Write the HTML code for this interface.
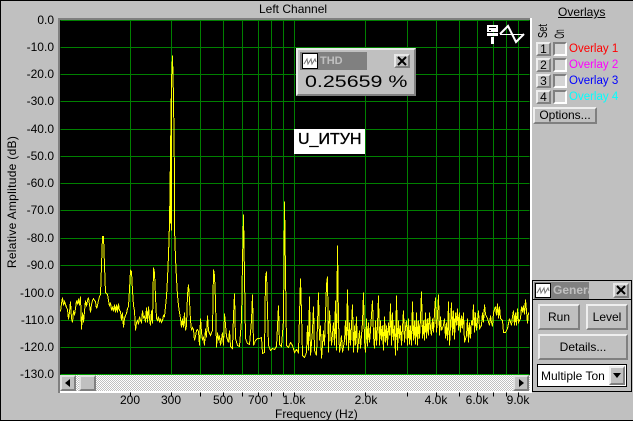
<!DOCTYPE html>
<html><head><meta charset="utf-8"><style>
*{box-sizing:border-box}
html,body{margin:0;padding:0}
body{width:633px;height:421px;overflow:hidden;background:#c0c0c0;font-family:"Liberation Sans",Arial,sans-serif;font-size:12px;color:#000;position:relative}
.a{position:absolute}
.t{position:absolute;white-space:nowrap;line-height:14px}
.yl{position:absolute;right:579px;white-space:nowrap;line-height:14px}
.xl{position:absolute;top:393px;width:50px;margin-left:-25px;text-align:center;line-height:14px}
.b{position:absolute;background:#c0c0c0;border:2px solid;border-color:#eee #808080 #808080 #eee;text-align:center;white-space:nowrap}
.ck{position:absolute;left:553px;width:14px;height:14px;background:#d4d4d4;border:2px solid;border-color:#808080 #fff #fff #808080}
.ov{position:absolute;left:569px;font-size:11.5px;line-height:14px;white-space:nowrap}
</style></head><body>
<div class="a" style="left:0;top:0;width:633px;height:1px;background:#000"></div>
<div class="a" style="left:0;top:0;width:1px;height:421px;background:#000"></div>
<div class="a" style="left:0;top:420px;width:633px;height:1px;background:#000"></div>
<div class="t" style="left:259px;top:2px">Left Channel</div>

<div class="a" style="left:58px;top:18px;width:474px;height:375px;background:#808080"></div>
<div class="a" style="left:530px;top:18px;width:2px;height:375px;background:#fff"></div>
<div class="a" style="left:60px;top:391px;width:472px;height:2px;background:#fff"></div>
<div class="a" style="left:60px;top:20px;width:470px;height:355px;background:#000"></div>

<svg class="a" style="left:0;top:0" width="633" height="421" viewBox="0 0 633 421" shape-rendering="crispEdges">
<g stroke="#008000" stroke-width="1" fill="none" transform="translate(.5,.5)">
<path d="M60 20H529M60 47H529M60 74H529M60 101H529M60 129H529M60 156H529M60 183H529M60 210H529M60 238H529M60 265H529M60 293H529M60 320H529M60 347H529"/>
<path d="M130 20V374M171 20V374M200 20V374M223 20V374M242 20V374M258 20V374M271 20V374M283 20V374M294 20V374M365 20V374M407 20V374M436 20V374M459 20V374M477 20V374M493 20V374M506 20V374M518 20V374"/>
<path stroke="#00a000" d="M60 374H529"/>
</g>
<g stroke="#000" stroke-width="1" fill="none" transform="translate(.5,.5)">
<path d="M130 392V396M171 392V396M200 392V396M223 392V396M242 392V396M258 392V396M271 392V396M283 392V396M294 392V396M365 392V396M407 392V396M436 392V396M459 392V396M477 392V396M493 392V396M506 392V396M518 392V396"/>
</g>
<g stroke="#ffff00" stroke-width="1" fill="none" transform="translate(.5,.5)">
<polyline points="60,311 61,303 62,297 63,305 64,301 65,304 66,307 67,309 68,319 69,312 70,301 71,318 72,322 73,310 74,315 75,308 76,300 77,304 78,298 79,305 80,296 81,329 82,312 83,322 84,311 85,300 86,306 87,300 88,297 89,304 90,312 91,304 92,300 93,298 94,300 95,301 96,308 97,305 98,300 99,296 100,294 101,265 102,236 103,236 104,265 105,292 106,293 107,294 108,300 109,306 110,302 111,310 112,306 113,311 114,304 115,312 116,304 117,312 118,303 119,310 120,311 121,320 122,312 123,327 124,318 125,315 126,313 127,308 128,306 129,289 130,270 131,271 132,290 133,305 134,310 135,330 136,322 137,320 138,324 139,316 140,320 141,322 142,310 143,318 144,315 145,322 146,307 147,322 148,306 149,318 150,325 151,310 152,323 153,267 154,272 155,296 156,318 157,320 158,316 159,322 160,318 161,322 162,320 163,315 164,316 165,306 166,296 167,278 168,255 169,223 170,154 171,80 172,55 173,97 174,176 174,228 175,258 176,278 177,295 178,305 179,312 180,318 181,327 182,318 183,327 184,312 185,330 186,325 187,294 188,284 189,300 190,320 191,330 192,327 193,329 194,340 195,336 196,330 197,329 198,331 199,345 200,318 201,332 202,340 203,336 204,345 205,328 206,337 207,315 208,330 209,333 210,335 211,332 212,330 213,269 214,275 215,300 216,347 217,332 218,340 219,335 220,345 222,332 223,345 224,313 226,336 228,342 229,330 230,346 232,348 233,315 234,293 235,338 237,345 239,346 241,320 242,260 243,214 244,276 245,338 247,343 249,344 251,320 252,294 253,345 255,340 257,338 259,338 261,337 262,353 264,352 265,277 266,271 267,310 268,345 270,350 272,348 274,349 276,346 277,326 278,305 279,344 281,346 283,320 284,201 285,272 286,345 288,347 290,342 292,345 294,352 296,349 298,352 299,315 300,278 301,312 302,355 304,357 306,352 307,325 308,350 309,296 310,355 312,330 313,306 314,350 316,355 318,292 319,340 320,325 321,358 323,330 324,345 326,284 327,276 328,352 329,310 331,345 333,322 334,345 335,300 336,350 337,245 338,320 339,352 341,335 342,352 344,340 345,320 346,345 347,289 348,350 349,322 350,345 352,304 353,352 354,325 355,345 356,316 357,352 359,330 360,348 362,322 363,292 364,340 365,352 366,318 367,346 368,322 369,342 370,330 372,300 373,335 374,348 375,320 376,345 377,325 378,295 379,345 380,320 381,340 382,325 383,350 384,316 385,342 386,325 387,345 388,322 389,335 390,303 391,345 392,312 393,340 394,325 395,355 396,295 397,350 398,320 399,338 400,325 401,345 403,310 404,342 405,327 406,320 407,345 408,318 409,344 410,325 411,345 412,301 413,340 414,320 415,344 416,312 417,345 418,320 419,338 420,318 421,291 422,338 423,320 424,340 425,312 426,338 427,318 428,335 429,312 430,328 431,335 432,318 433,332 434,312 435,297 436,332 437,315 438,294 439,335 440,316 441,330 443,325 444,318 445,338 446,322 447,340 448,301 449,345 450,325 451,302 452,335 453,310 454,339 455,312 456,325 457,308 458,330 459,312 460,332 461,315 462,328 463,312 464,342 466,335 467,318 468,342 469,322 470,338 471,320 472,325 473,304 474,332 475,312 476,330 478,310 479,328 481,325 482,312 483,322 484,304 485,314 487,318 489,325 490,315 491,322 492,326 493,312 495,306 496,315 497,303 498,318 499,306 500,318 502,320 503,332 505,332 507,328 509,318 511,325 512,316 513,310 514,325 515,312 516,325 517,308 518,322 520,318 521,306 522,312 523,305 524,314 525,299 526,310 527,323 528,312"/>
<path d="M171 80V230M170 154V223M174 176V228"/>
</g>
<!-- logo in plot -->
<g fill="none" stroke="#fff" stroke-width="2" shape-rendering="auto">
<polyline points="500,34 508,26 516,42 524,34"/>
<path stroke-width="1" d="M500 34.5H524"/>
</g>
<path d="M487 25h11v7h-11zM487 33h11v3h-11zM491 37h3v7h-3z" fill="#fff"/>
<path d="M489 27h7v1h-7zM489 30h2v1h-2z" fill="#000"/>
</svg>

<!-- scrollbar -->
<div class="a" style="left:60px;top:375px;width:470px;height:16px;background:repeating-conic-gradient(#c0c0c0 0 25%,#fff 0 50%) 0 0/2px 2px"></div>
<div class="b" style="left:60px;top:375px;width:16px;height:16px;border-color:#e0e0e0 #808080 #808080 #e0e0e0"></div>
<div class="a" style="left:65px;top:379px;width:0;height:0;border:4px solid transparent;border-right:5px solid #000;border-left:0"></div>
<div class="b" style="left:79px;top:375px;width:17px;height:16px;border-color:#e0e0e0 #808080 #808080 #e0e0e0"></div>
<div class="b" style="left:513px;top:375px;width:16px;height:16px;border-color:#e0e0e0 #808080 #808080 #e0e0e0"></div>
<div class="a" style="left:519px;top:379px;width:0;height:0;border:4px solid transparent;border-left:5px solid #000;border-right:0"></div>

<!-- y labels -->
<div class="yl" style="top:13px">0.0</div>
<div class="yl" style="top:40px">-10.0</div>
<div class="yl" style="top:67px">-20.0</div>
<div class="yl" style="top:94px">-30.0</div>
<div class="yl" style="top:122px">-40.0</div>
<div class="yl" style="top:149px">-50.0</div>
<div class="yl" style="top:176px">-60.0</div>
<div class="yl" style="top:203px">-70.0</div>
<div class="yl" style="top:231px">-80.0</div>
<div class="yl" style="top:258px">-90.0</div>
<div class="yl" style="top:286px">-100.0</div>
<div class="yl" style="top:313px">-110.0</div>
<div class="yl" style="top:340px">-120.0</div>
<div class="yl" style="top:367px">-130.0</div>
<div class="t" style="left:12px;top:202px;transform:translate(-50%,-50%) rotate(-90deg);letter-spacing:.3px">Relative Amplitude (dB)</div>

<!-- x labels -->
<div class="xl" style="left:130px">200</div>
<div class="xl" style="left:171px">300</div>
<div class="xl" style="left:223px">500</div>
<div class="xl" style="left:258px">700</div>
<div class="xl" style="left:294px">1.0k</div>
<div class="xl" style="left:366px">2.0k</div>
<div class="xl" style="left:436px">4.0k</div>
<div class="xl" style="left:477px">6.0k</div>
<div class="xl" style="left:518px">9.0k</div>
<div class="t" style="left:275px;top:407px">Frequency (Hz)</div>

<!-- THD window -->
<div class="a" style="left:296px;top:48px;width:120px;height:48px;background:#c0c0c0;border:2px solid;border-color:#e8e8e8 #808080 #808080 #e8e8e8"></div>
<div class="a" style="left:300px;top:52px;width:67px;height:18px;background:#808080"></div>
<svg class="a" style="left:302px;top:53px" width="16" height="16"><rect x=".5" y=".5" width="15" height="15" fill="#fff" stroke="#000"/><path d="M2 11L5 6L6 11L9 6L10 11L13 6L14 9" stroke="#777" fill="none"/></svg>
<div class="t" style="left:320px;top:54px;font-weight:bold;color:#c0c0c0;font-size:11px">THD</div>
<div class="a" style="left:394px;top:54px;width:16px;height:14px;border:2px solid;border-color:#e8e8e8 #808080 #808080 #e8e8e8"></div>
<div class="t" style="left:305px;top:73px;font-size:17px;line-height:18px;transform:scaleX(1.26);transform-origin:left">0.25659 %</div>
<svg class="a" style="left:392px;top:52px" width="20" height="18"><path d="M6 5L14 13M14 5L6 13" stroke="#000" stroke-width="2"/></svg>

<!-- label -->
<div class="a" style="left:294px;top:129px;width:71px;height:25px;background:#fff"></div>
<div class="t" style="left:298px;top:131px;font-size:16px;line-height:18px;-webkit-text-stroke:.35px #000;font-family:'Liberation Sans',Arial,'Noto Sans CJK SC',sans-serif">U_ИТУН</div>

<!-- overlays -->
<div class="t" style="left:558px;top:5px;text-decoration:underline">Overlays</div>
<div class="t" style="left:543px;top:30.5px;font-size:13px;transform:translate(-50%,-50%) rotate(-90deg) scaleX(.72)">Set</div>
<div class="t" style="left:559px;top:34px;font-size:14px;transform:translate(-50%,-50%) rotate(-90deg) scaleX(.5)">On</div>
<div class="b" style="left:536px;top:42px;width:15px;height:14px;line-height:10px;font-size:12px">1</div>
<div class="b" style="left:536px;top:58px;width:15px;height:14px;line-height:10px;font-size:12px">2</div>
<div class="b" style="left:536px;top:74px;width:15px;height:14px;line-height:10px;font-size:12px">3</div>
<div class="b" style="left:536px;top:90px;width:15px;height:14px;line-height:10px;font-size:12px">4</div>
<div class="ck" style="top:42px"></div><div class="ck" style="top:58px"></div><div class="ck" style="top:74px"></div><div class="ck" style="top:90px"></div>
<div class="ov" style="top:42px;color:#f00">Overlay 1</div>
<div class="ov" style="top:58px;color:#f0f">Overlay 2</div>
<div class="ov" style="top:74px;color:#00f">Overlay 3</div>
<div class="ov" style="top:90px;color:#0ff">Overlay 4</div>
<div class="b" style="left:533px;top:107px;width:64px;height:17px;line-height:13px">Options...</div>

<!-- generator -->
<div class="a" style="left:532px;top:280px;width:100px;height:112px;background:#c0c0c0;border:1px solid #000"></div>
<div class="a" style="left:534px;top:282px;width:55px;height:17px;background:#808080"></div>
<div class="a" style="left:533px;top:299px;width:98px;height:1px;background:#000"></div>
<svg class="a" style="left:535px;top:283px" width="16" height="15"><rect x=".5" y=".5" width="15" height="14" fill="#fff" stroke="#000"/><path d="M2 10L5 5L6 10L9 5L10 10L13 5L14 8" stroke="#777" fill="none"/></svg>
<div class="a" style="left:553px;top:283px;width:36px;height:14px;overflow:hidden"><div class="t" style="left:0;top:0;font-weight:bold;color:#c0c0c0">Generator</div></div>
<div class="a" style="left:613px;top:283px;width:16px;height:15px;border:2px solid;border-color:#e8e8e8 #808080 #808080 #e8e8e8"></div>
<svg class="a" style="left:613px;top:283px" width="16" height="15"><path d="M4 3L12 11M12 3L4 11" stroke="#000" stroke-width="2"/></svg>
<div class="b" style="left:538px;top:304px;width:42px;height:26px;line-height:22px">Run</div>
<div class="b" style="left:586px;top:304px;width:42px;height:26px;line-height:22px">Level</div>
<div class="b" style="left:538px;top:334px;width:90px;height:26px;line-height:22px">Details...</div>
<div class="a" style="left:537px;top:364px;width:90px;height:23px;background:#fff;border:1px solid #000"></div>
<div class="t" style="left:541px;top:369px">Multiple Ton</div>
<div class="b" style="left:609px;top:366px;width:16px;height:19px"></div>
<div class="a" style="left:613px;top:373px;width:0;height:0;border:4px solid transparent;border-top:5px solid #000;border-bottom:0"></div>
</body></html>
